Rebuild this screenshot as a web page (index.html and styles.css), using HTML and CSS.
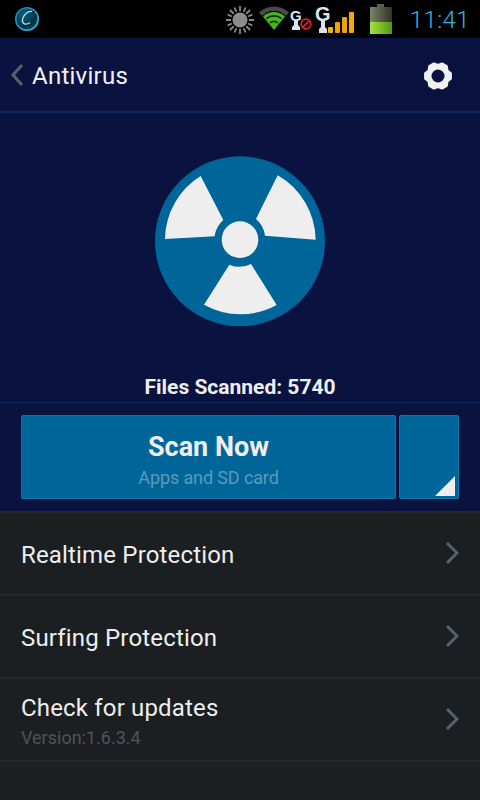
FILE: index.html
```html
<!DOCTYPE html>
<html lang="en">
<head>
<meta charset="utf-8">
<title>Antivirus</title>
<link rel="stylesheet" href="styles.css">
</head>
<body>
<div class="status">
  <svg class="logo" viewBox="0 0 28 28" width="28" height="28">
    <defs>
      <radialGradient id="lg" cx="35%" cy="30%" r="80%"><stop offset="0" stop-color="#0b5f7a"/><stop offset="0.7" stop-color="#06303f"/><stop offset="1" stop-color="#0a6f8f"/></radialGradient>
      <linearGradient id="lr" x1="0" y1="0" x2="1" y2="1"><stop offset="0" stop-color="#0f7fa6"/><stop offset="1" stop-color="#35c3ee"/></linearGradient>
    </defs>
    <circle cx="14" cy="14" r="11.3" fill="url(#lg)" stroke="url(#lr)" stroke-width="1.500"/>
    <path d="M19 6.500C14.500 6 10 10 9.400 15c-.4 4 3.400 5.200 7.600 2.800" fill="none" stroke="#a5e3f5" stroke-width="1.300"/>
  </svg>
  <div class="status-right">
    <svg class="si-sun" viewBox="0 0 30 30" width="30" height="30">
      <g stroke="#8a8a8a" stroke-width="1.8">
        <path d="M15 1v28M1 15h28M5 5l20 20M25 5L5 25M9.5 2.5l11 25M20.500 2.500l-11 25M2.500 9.500l25 11M27.500 9.500l-25 11"/>
      </g>
      <circle cx="15" cy="15" r="9" fill="#000"/>
      <circle cx="15" cy="15" r="7.500" fill="#8c8c8c"/>
    </svg>
    <svg class="si-wifi" viewBox="0 0 32 26" width="32" height="26">
      <path d="M1 7.500C9-.5 23-.5 31 7.500L28 11C21 4 11 4 4 11Z" fill="#4a4a4a"/>
      <path d="M5 11.500C11 5.500 21 5.500 27 11.500L16 25Z" fill="#49b51c"/>
      <path d="M8.500 13.500C13 10 19 10 23.500 13.500M12 18C14.500 16 17.500 16 20 18" stroke="#0d2a08" stroke-width="1.600" fill="none"/>
    </svg>
    <svg class="si-key" viewBox="0 0 24 26" width="24" height="26">
      <text class="k-small" x="0" y="15">G</text>
      <path d="M2 24v-3l2-2v-5h4v5l2 2v3z" fill="#d9e4f2"/>
      <circle cx="16" cy="18" r="4.800" fill="none" stroke="#e0242c" stroke-width="1.700"/>
      <path d="M12.800 21.200l6.400-6.400" stroke="#e0242c" stroke-width="1.700"/>
    </svg>
    <svg class="si-signal" viewBox="0 0 40 30" width="40" height="30">
      <text class="k-big" x="0" y="18">G</text>
      <path d="M4 30v-4l2-2v-7h4v7l2 2v4z" fill="#d9e4f2"/>
      <rect x="13" y="24" width="5" height="6" rx="1" fill="#f5b400"/>
      <rect x="20" y="19" width="5" height="11" rx="1" fill="#f0a400"/>
      <rect x="27" y="14" width="5" height="16" rx="1" fill="#f0a000"/>
      <rect x="34" y="9" width="5" height="21" rx="1" fill="#f5aa00"/>
    </svg>
    <svg class="si-batt" viewBox="0 0 24 30" width="24" height="30">
      <defs>
        <linearGradient id="be" x1="0" x2="1"><stop offset="0" stop-color="#7c8468"/><stop offset="1" stop-color="#2f3328"/></linearGradient>
        <linearGradient id="bf" x1="0" x2="1"><stop offset="0" stop-color="#a8e23c"/><stop offset="1" stop-color="#4e9a10"/></linearGradient>
      </defs>
      <rect x="8" y="0" width="7" height="4" fill="#5a6050"/>
      <rect x="1" y="3" width="22" height="27" fill="url(#be)"/>
      <rect x="1" y="18" width="22" height="12" fill="url(#bf)"/>
    </svg>
    <span class="clock">11:41</span>
  </div>
</div>

<div class="top">
  <header class="bar">
    <div class="title-wrap">
      <svg class="back" viewBox="0 0 14 24" width="14" height="24"><path d="M12 2L3 12l9 10" fill="none" stroke="#5b6068" stroke-width="3"/></svg>
      <h1 class="title">Antivirus</h1>
    </div>
    <svg class="gear" viewBox="0 0 30 30" width="30" height="30">
      <path class="gear-body" d="M27.900 12.300V17.700L24.500 20.500 23.800 24.800 19.100 27.600 15 26 10.900 27.600 6.200 24.800 5.500 20.500 2.100 17.700V12.300L5.500 9.500 6.200 5.200 10.900 2.400 15 4 19.100 2.400 23.800 5.200 24.500 9.500Z"/>
      <circle class="gear-hole" cx="15" cy="15" r="6.500"/>
    </svg>
  </header>
  <section class="hero">
    <svg class="radiation" viewBox="0 0 600 600" width="200" height="200">
      <circle cx="300" cy="304" r="255" fill="#006699"/>
      <g fill="#eeeeee">
        <circle cx="300" cy="299" r="55"/>
        <path d="M75 297A226 226 0 0 1 182 108L250 240A77 77 0 0 0 224 289Z"/>
        <path d="M413 106A226 226 0 0 1 527 299L375 287A77 77 0 0 0 348 237Z"/>
        <path d="M192 494A226 226 0 0 0 410 495L333 372A77 77 0 0 1 268 374Z"/>
      </g>
    </svg>
    <p class="scanned">Files Scanned: 5740</p>
  </section>
  <section class="actions">
    <button class="scan">
      <span class="scan-title">Scan Now</span>
      <span class="scan-sub">Apps and SD card</span>
    </button>
    <button class="more"><span class="corner"></span></button>
  </section>
</div>

<ul class="list">
  <li class="row"><div><div class="row-title">Realtime Protection</div></div>
    <svg class="chev" viewBox="0 0 14 24" width="14" height="24"><path d="M2 2l10 10L2 22" fill="none" stroke="#5b6068" stroke-width="3"/></svg></li>
  <li class="row"><div><div class="row-title">Surfing Protection</div></div>
    <svg class="chev" viewBox="0 0 14 24" width="14" height="24"><path d="M2 2l10 10L2 22" fill="none" stroke="#5b6068" stroke-width="3"/></svg></li>
  <li class="row"><div class="row-text"><div class="row-title">Check for updates</div><div class="row-sub">Version:1.6.3.4</div></div>
    <svg class="chev" viewBox="0 0 14 24" width="14" height="24"><path d="M2 2l10 10L2 22" fill="none" stroke="#5b6068" stroke-width="3"/></svg></li>
</ul>
</body>
</html>
```

FILE: styles.css
```css
* { box-sizing: border-box; }
html, body { margin: 0; padding: 0; }
body {
  width: 480px;
  height: 800px;
  overflow: hidden;
  background: #1b1f22;
  font-family: Roboto, "Liberation Sans", sans-serif;
  color: #f1f1f1;
  display: flex;
  flex-direction: column;
}
.status {
  height: 38px;
  background: #000;
  display: flex;
  align-items: center;
  justify-content: space-between;
  padding: 0 10px 0 13px;
}
.status-right { display: flex; align-items: center; height: 38px; }
.si-sun { margin-top: 1px; }
.si-wifi { margin-left: 3px; margin-top: -2px; }
.si-key { margin-top: 0; }
.si-signal { margin-left: 1px; margin-top: -2px; }
.si-batt { margin-left: 14px; margin-top: -1px; }
.clock {
  margin-left: 17px;
  font-size: 24px;
  letter-spacing: 0.4px;
  line-height: 30px;
  padding-top: 2px;
  color: #33b5e5;
  font-weight: 300;
}
.k-small { font: bold 15px "Liberation Sans", sans-serif; fill: #d9e4f2; }
.k-big { font: bold 20px "Liberation Sans", sans-serif; fill: #d9e4f2; }
.top {
  background: #0a1340;
  height: 473px;
  display: flex;
  flex-direction: column;
}
.bar {
  height: 75px;
  border-bottom: 2px solid #0b2a55;
  display: flex;
  align-items: center;
  justify-content: space-between;
  padding: 0 27px 0 10px;
}
.title-wrap { display: flex; align-items: center; gap: 8px; }
.title { margin: 2px 0 0; font-size: 24px; font-weight: 400; letter-spacing: 0.25px; }
.gear { margin-top: 3px; }
.gear-body { fill: #f1f1f1; stroke: #f1f1f1; stroke-width: 2; stroke-linejoin: round; }
.gear-hole { fill: #0a1340; }
.hero {
  height: 290px;
  border-bottom: 1px solid #0b2a55;
  display: flex;
  flex-direction: column;
  align-items: center;
  padding-top: 27px;
}
.radiation { display: block; }
.scanned {
  margin: 35px 0 0;
  font-size: 21px;
  font-weight: 700;
  line-height: 24px;
  color: #eeeeee;
}
.actions {
  display: flex;
  gap: 3px;
  padding: 12px 21px 0;
}
.scan, .more {
  height: 84px;
  background: #006699;
  border: 1px solid #0a76a8;
  border-radius: 2px;
  padding: 0;
  font-family: inherit;
}
.scan {
  width: 375px;
  display: flex;
  flex-direction: column;
  align-items: center;
}
.more { width: 60px; position: relative; }
.corner {
  position: absolute;
  right: 3px;
  bottom: 2px;
  width: 20px;
  height: 20px;
  background: #eeeeee;
  clip-path: polygon(100% 0, 100% 100%, 0 100%);
}
.scan-title {
  margin-top: 15px;
  font-size: 27px;
  font-weight: 700;
  line-height: 32px;
  color: #eeeeee;
}
.scan-sub {
  margin-top: 4px;
  font-size: 18px;
  letter-spacing: -0.12px;
  line-height: 22px;
  color: #5c9abb;
}
.list {
  list-style: none;
  margin: 0;
  padding: 0;
  border-top: 2px solid #25292c;
}
.row {
  height: 83px;
  border-bottom: 2px solid #25292c;
  display: flex;
  align-items: center;
  justify-content: space-between;
  padding: 0 21px;
}
.row-title { font-size: 24px; letter-spacing: 0.17px; line-height: 30px; margin-top: 2px; color: #eeeeee; }
.row-text { padding-top: 2px; }
.row-text .row-title { margin-top: 0; }
.row-sub { font-size: 18px; line-height: 22px; color: #4f5357; margin-top: 4px; }
.chev { margin-top: -2px; }
```
